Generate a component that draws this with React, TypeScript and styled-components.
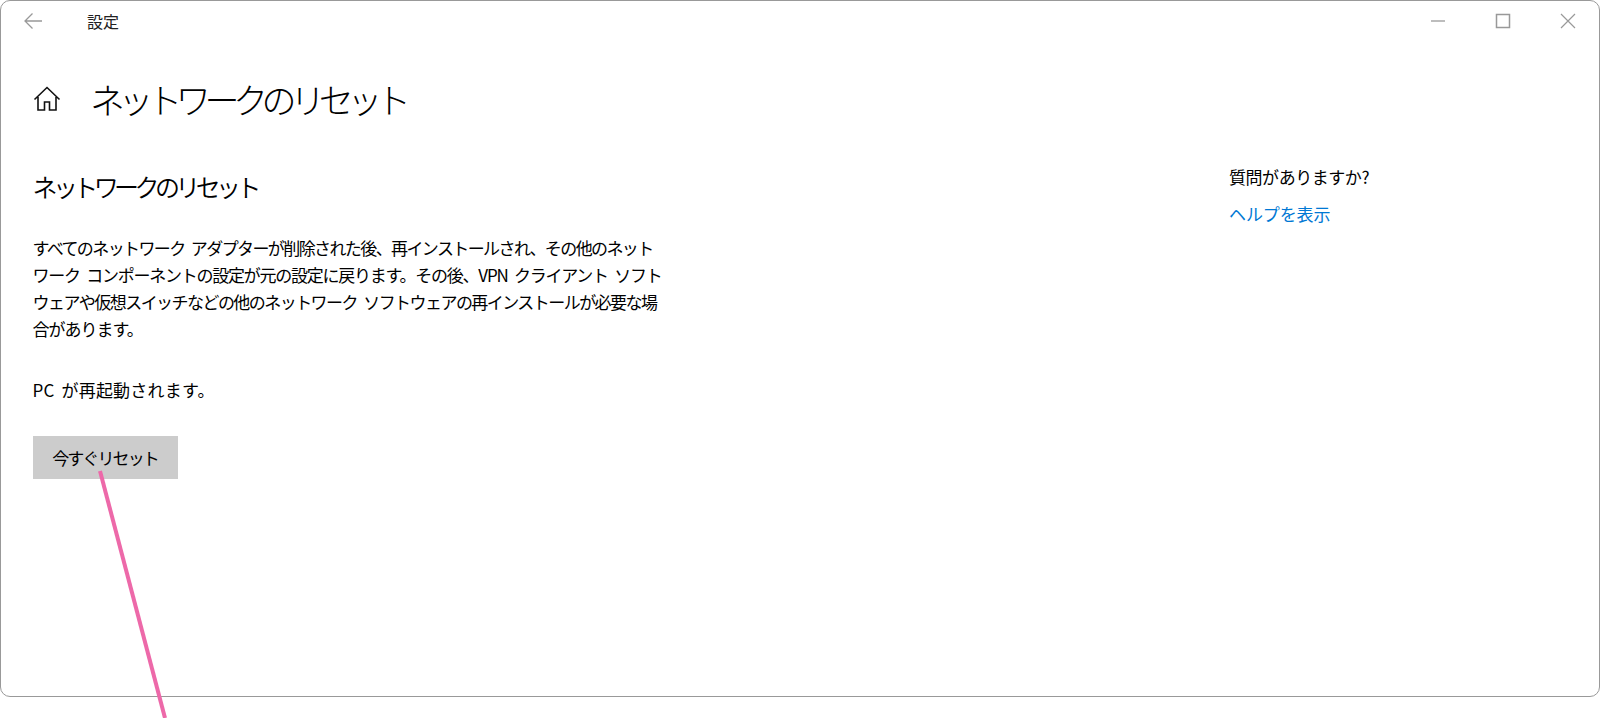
import { createGlobalStyle, styled } from "styled-components";

const GlobalStyle = createGlobalStyle`
  html, body {
    margin: 0;
    padding: 0;
    background: #fff;
  }

  body {
    font-family: "Noto Sans CJK JP", "Noto Sans", sans-serif;
    color: #000;
  }
`;

const Page = styled.div`
  position: relative;
  width: 1600px;
  height: 718px;
  overflow: hidden;
  background: #fff;
`;

const Window = styled.div`
  box-sizing: border-box;
  width: 1600px;
  height: 697px;
  border: 1.5px solid #999;
  border-radius: 10px;
  display: flex;
  flex-direction: column;
`;

const TitleBar = styled.div`
  height: 40px;
  display: flex;
  align-items: center;
  padding-left: 22px;
`;

const AppName = styled.span`
  margin-left: 44px;
  font-size: 16px;
  letter-spacing: -0.1px;
  color: #222;
`;

const WindowControls = styled.div`
  margin-left: auto;
  display: flex;
  align-items: center;
  gap: 49px;
  padding-right: 23px;
`;

const PageHeader = styled.div`
  display: flex;
  align-items: center;
  padding: 32px 0 0 32px;
  height: 52px;
`;

const PageTitle = styled.h1`
  margin: 0 0 0 29px;
  font-size: 35px;
  font-weight: 300;
  line-height: 52px;
  letter-spacing: -6.4px;
`;

const Columns = styled.div`
  display: flex;
  justify-content: space-between;
  padding: 36px 0 0 31.5px;
`;

const MainColumn = styled.div`
  width: 640px;
  padding-top: 7px;
`;

const SectionTitle = styled.h2`
  margin: 0;
  font-size: 25px;
  font-weight: 350;
  line-height: 36px;
  letter-spacing: -4.6px;
`;

const Paragraph = styled.p`
  margin: 30px 0 0;
  font-size: 17px;
  line-height: 27px;
  white-space: nowrap;
  word-spacing: 4px;
`;

const Line = styled.span<{ $spacing: number }>`
  display: block;
  letter-spacing: ${(p) => p.$spacing}px;
`;

const Notice = styled(Paragraph)`
  margin-top: 34px;
  letter-spacing: 0.2px;
  word-spacing: 3px;
`;

const ResetButton = styled.button`
  margin-top: 33px;
  width: 145px;
  height: 43px;
  border: 0;
  padding: 0;
  background: #ccc;
  font-family: inherit;
  font-size: 17px;
  letter-spacing: -1.9px;
  color: #000;
`;

const HelpColumn = styled.aside`
  width: 370px;
`;

const HelpTitle = styled.div`
  font-size: 17px;
  line-height: 31px;
  letter-spacing: -0.45px;
`;

const HelpLink = styled.a`
  display: block;
  margin-top: 6px;
  font-size: 17px;
  line-height: 31px;
  letter-spacing: -0.1px;
  color: #0078d4;
`;

const Pointer = styled.svg`
  position: absolute;
  left: 0;
  top: 0;
`;

export default function App() {
  return (
    <Page>
      <GlobalStyle />
      <Window>
        <TitleBar>
          <svg width="20" height="18" viewBox="0 0 20 18" fill="none" stroke="#999" strokeWidth="1.3">
            <path d="M19 9H2M9.5 1.5L2 9l7.5 7.5" />
          </svg>
          <AppName>設定</AppName>
          <WindowControls>
            <svg width="16" height="16" viewBox="0 0 16 16" fill="none" stroke="#999" strokeWidth="1.3">
              <path d="M1 8h14" />
            </svg>
            <svg width="16" height="16" viewBox="0 0 16 16" fill="none" stroke="#999" strokeWidth="1.5">
              <rect x="1.5" y="1.5" width="13" height="13" />
            </svg>
            <svg width="16" height="16" viewBox="0 0 16 16" fill="none" stroke="#999" strokeWidth="1.2">
              <path d="M1 1l14 14M15 1L1 15" />
            </svg>
          </WindowControls>
        </TitleBar>
        <PageHeader>
          <svg width="28" height="28" viewBox="0 0 28 28" fill="none" stroke="#111" strokeWidth="1.6">
            <path d="M1.5 14.5L14 2.5l12.5 12M5 12v13h6.5v-8h5v8H23V12" />
          </svg>
          <PageTitle>ネットワークのリセット</PageTitle>
        </PageHeader>
        <Columns>
          <MainColumn>
            <SectionTitle>ネットワークのリセット</SectionTitle>
            <Paragraph>
              <Line $spacing={-1.6}>
                すべてのネットワーク アダプターが削除された後、再インストールされ、その他のネット
              </Line>
              <Line $spacing={-1.25}>
                ワーク コンポーネントの設定が元の設定に戻ります。その後、VPN クライアント ソフト
              </Line>
              <Line $spacing={-1.55}>
                ウェアや仮想スイッチなどの他のネットワーク ソフトウェアの再インストールが必要な場
              </Line>
              <Line $spacing={-1}>合があります。</Line>
            </Paragraph>
            <Notice>PC が再起動されます。</Notice>
            <ResetButton>今すぐリセット</ResetButton>
          </MainColumn>
          <HelpColumn>
            <HelpTitle>質問がありますか?</HelpTitle>
            <HelpLink>ヘルプを表示</HelpLink>
          </HelpColumn>
        </Columns>
      </Window>
      <Pointer width="1600" height="718" viewBox="0 0 1600 718">
        <line x1="100" y1="471" x2="165" y2="718" stroke="#ed69a9" strokeWidth="4" />
      </Pointer>
    </Page>
  );
}
